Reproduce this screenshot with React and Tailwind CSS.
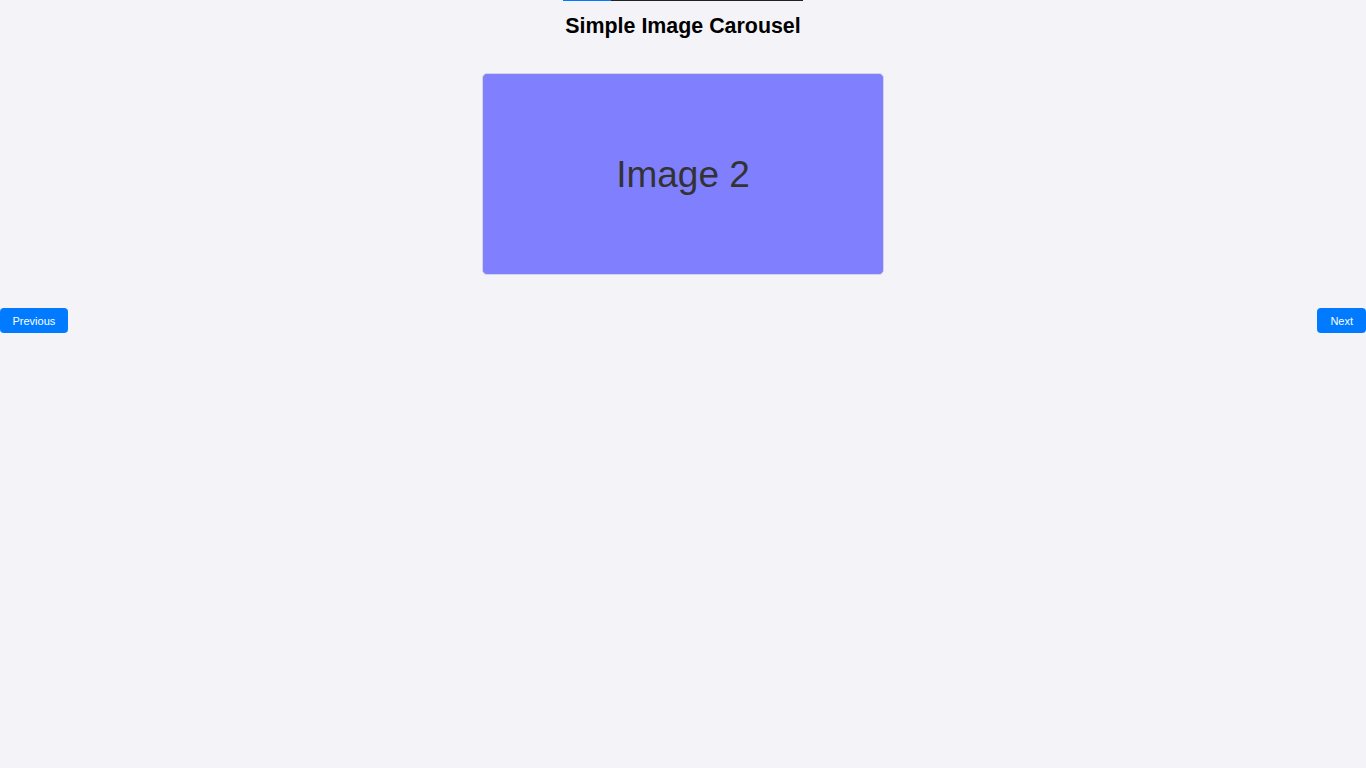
import React from "react";

export default function App() {
  return (
    <div className="min-h-[768px] w-full bg-[#f4f4f8] flex flex-col items-center" style={{ fontFamily: '"Liberation Sans", Arial, sans-serif' }}>
      <div className="flex h-px w-[240px]">
        <div className="w-[48px] bg-[#007bff]" />
        <div className="flex-1 bg-[#222]" />
      </div>
      <h1 className="mt-[13px] text-[21.4px] leading-[24px] font-bold text-black">Simple Image Carousel</h1>
      <div className="mt-[35px] w-[402px] h-[202px] rounded-[5px] border border-[#d4d4e4] bg-[#8080ff] flex items-center justify-center">
        <span className="text-[37px] text-[#333] pt-[2px]">Image 2</span>
      </div>
      <div className="mt-[33px] w-full flex justify-between">
        <button className="h-[25px] px-[12.5px] pt-[2px] rounded-[4px] bg-[#007bff] text-white text-[11px]">Previous</button>
        <button className="h-[25px] px-[13px] pt-[2px] rounded-[4px] bg-[#007bff] text-white text-[11px]">Next</button>
      </div>
    </div>
  );
}
